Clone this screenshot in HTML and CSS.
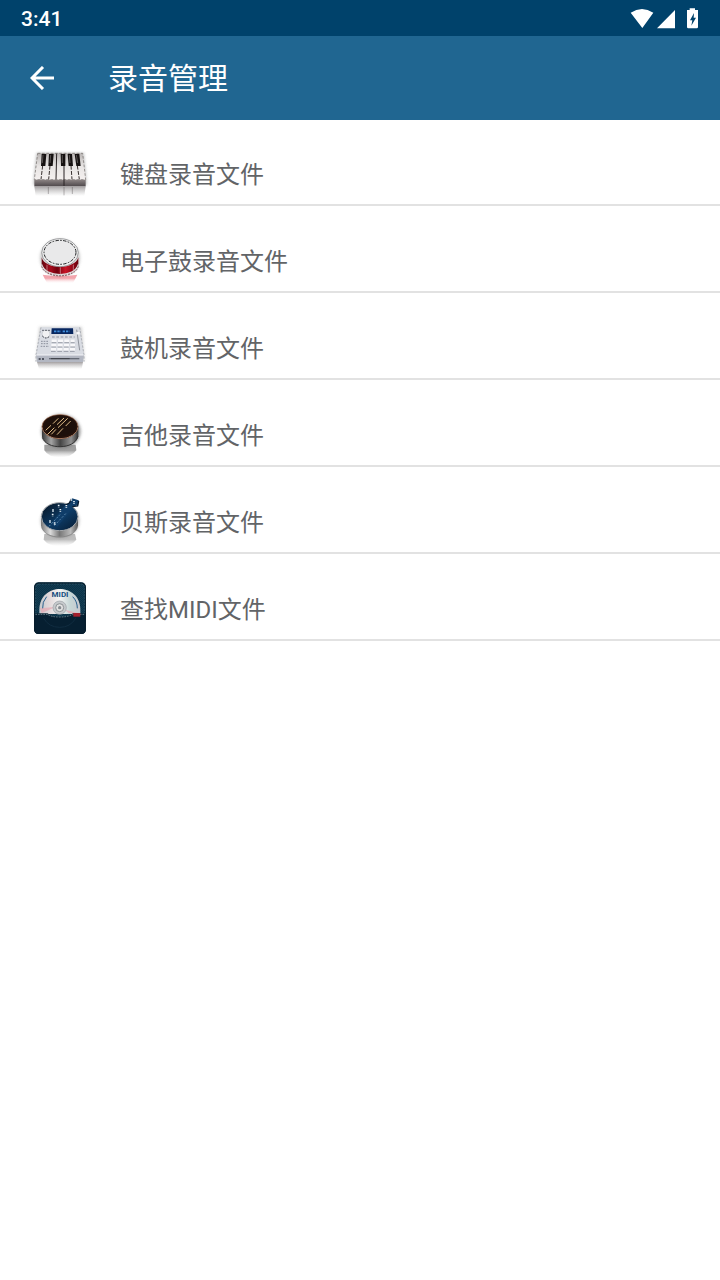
FILE: index.html
```html
<!DOCTYPE html>
<html lang="zh-CN">
<head>
<meta charset="utf-8">
<meta name="viewport" content="width=device-width, initial-scale=1">
<title>录音管理</title>
<link rel="stylesheet" href="styles.css">
</head>
<body>
<div class="status-bar">
  <time class="clock">3:41</time>
  <svg class="status-icons" viewBox="60 20 210 66" aria-hidden="true">
    <path fill="#fff" d="M62 34Q96 12 130 34L97 80ZM141 81L195 26V81ZM239 21h16v5h9v51q0 4-4 4h-25q-4 0-4-4V26h8Z"/>
    <path fill="#00426b" d="M252 35L240 57h7l-3 16 14-24h-7Z"/>
  </svg>
</div>
<header class="app-bar">
  <button class="back" type="button" aria-label="返回">
    <svg viewBox="0 0 24 24" aria-hidden="true"><path d="M24 12H2M13 1L2 12l11 11"/></svg>
  </button>
  <h1 class="title">录音管理</h1>
</header>
<main>
  <ul class="list">
    <li><a class="row" href="#keyboard">
      <svg class="icon" viewBox="15 -6 180 180" aria-hidden="true">
        <defs>
          <linearGradient id="keys" x2="0" y2="1"><stop stop-color="#b9b5b4"/><stop offset=".5" stop-color="#e8e5e4"/><stop offset="1" stop-color="#f4f0ef"/></linearGradient>
          <linearGradient id="front" x2="0" y2="1"><stop stop-color="#8c8484"/><stop offset="1" stop-color="#4e484b"/></linearGradient>
          <linearGradient id="fade" x2="0" y2="1"><stop stop-color="#878284" stop-opacity=".75"/><stop offset="1" stop-color="#aaa" stop-opacity="0"/></linearGradient>
          <filter id="soft" x="-20%" y="-20%" width="140%" height="140%"><feGaussianBlur stdDeviation="5"/></filter>
        </defs>
        <path d="M35 24H176L185 120H25Z" fill="#777" opacity=".5" filter="url(#soft)"/>
        <path d="M38 25H173L182 104H28Z" fill="url(#keys)"/>
        <path d="M38 25H173L182 104H28Z" fill="none" stroke="#6f6967" stroke-width="2" stroke-dasharray="8 5"/>
        <path d="M28 104H182V124H28Z" fill="url(#front)"/>
        <path d="M28 124H182L178 153H32Z" fill="url(#fade)"/>
        <path d="M53 62L48 103M75 62L71 103M138 62L141 103M157 62L163 103" stroke="#37302f" stroke-width="3" stroke-dasharray="12 4"/>
        <path d="M95 26L93 103M117 62V123" stroke="#292324" stroke-width="3"/>
        <path d="M50 27H64L61 63H48ZM72 27H86L83 63H70ZM107 27H121V63H108ZM128 27H141L144 63H131ZM149 27H163L167 63H154Z" fill="#151111"/>
        <path d="M54 30L52 54M77 30L75 54M112 30V54M133 30L135 54M154 30L158 54" stroke="#777170" stroke-width="2"/>
        <path d="M70 126V147M117 126V151M142 126V147" stroke="#514b4d" stroke-width="2" opacity=".6"/>
      </svg>
      <span class="label">键盘录音文件</span></a></li>
    <li><a class="row" href="#drum">
      <svg class="icon" viewBox="15 -6 180 180" aria-hidden="true">
        <defs>
          <linearGradient id="red"><stop stop-color="#64060f"/><stop offset=".25" stop-color="#a50b1c"/><stop offset=".42" stop-color="#71000d"/><stop offset=".65" stop-color="#c81426"/><stop offset="1" stop-color="#68000d"/></linearGradient>
          <linearGradient id="redfade" x2="0" y2="1"><stop offset=".4" stop-color="#ed7f8a" stop-opacity=".7"/><stop offset="1" stop-color="#fff" stop-opacity="0"/></linearGradient>
        </defs>
        <ellipse cx="105" cy="78" rx="60" ry="56" fill="#777" opacity=".4" filter="url(#soft)"/>
        <path d="M53 128Q105 136 157 128L143 155H67Z" fill="url(#redfade)"/>
        <path d="M50 64V97C57 140 153 140 161 97V64Z" fill="#dedede"/>
        <path d="M50 76V101C59 137 151 137 160 101V76C151 114 59 114 50 76Z" fill="url(#red)"/>
        <path d="M50 97C59 138 151 138 160 97" fill="none" stroke="#ddd" stroke-width="4"/>
        <path d="M50 103C59 141 151 141 160 103" fill="none" stroke="#58292e" stroke-width="2" stroke-dasharray="6 3"/>
        <path d="M66 98V118M106 106V128M145 98V118" stroke="#d9a6ab" stroke-width="2"/>
        <ellipse cx="105" cy="62" rx="55" ry="42" fill="#eee" stroke="#77797b" stroke-width="2"/>
        <ellipse cx="105" cy="61" rx="48" ry="36" fill="#e9e9ea" stroke="#242628" stroke-width="3" stroke-dasharray="10 4 5 4"/>
      </svg>
      <span class="label">电子鼓录音文件</span></a></li>
    <li><a class="row" href="#drum-machine">
      <svg class="icon" viewBox="15 -6 180 180" aria-hidden="true">
        <path d="M43 24H170L178 125H34Z" fill="#888" opacity=".4" filter="url(#soft)"/>
        <path d="M48 25H164L177 108H33Z" fill="#d9dce3"/>
        <path d="M33 108H177L174 129H36Z" fill="#b3b7c2"/>
        <path d="M36 129H174L170 150H42Z" fill="url(#fade)"/>
        <path d="M48 25L33 108V128M164 25L177 108V128" fill="none" stroke="#aeb1b8" stroke-width="3" stroke-dasharray="7 4"/>
        <path d="M34 108H176" stroke="#f3f4f7" stroke-width="3"/>
        <path d="M72 119H163" stroke="#666b76" stroke-width="4"/><path d="M78 119H134" stroke="#25282e" stroke-width="2"/>
        <path d="M41 120H59" stroke="#353943" stroke-width="5" stroke-dasharray="6 4"/>
        <path d="M80 28H144L145 45H79Z" fill="#07265f"/>
        <path d="M87 37H108M113 37H134" stroke="#3d8bda" stroke-width="5" stroke-dasharray="7 3"/>
        <circle cx="63" cy="45" r="12" fill="#f1f1f3" stroke="#c0c4cb" stroke-width="2"/>
        <path d="M52 34H76" stroke="#2b303a" stroke-width="3" stroke-dasharray="4 5"/><path d="M52 51Q63 63 74 51" fill="none" stroke="#343842" stroke-width="3" stroke-dasharray="5 4"/>
        <path d="M81 54H149" stroke="#a6abb6" stroke-width="4" stroke-dasharray="8 5"/>
        <path d="M48 67H72M48 74H72M47 82H72" stroke="#8b909c" stroke-width="3" stroke-dasharray="5 3"/>
        <path d="M80 66H149M79 79H150M78 91H151" stroke="#f8f8fa" stroke-width="9" stroke-dasharray="15 4"/>
        <path d="M80 71H149M79 84H150M78 97H151" stroke="#727987" stroke-width="2" stroke-dasharray="14 5"/>
        <path d="M155 32L164 94" stroke="#8e929b" stroke-width="3"/><path d="M154 43L164 42" stroke="#f8f8fa" stroke-width="7"/>
      </svg>
      <span class="label">鼓机录音文件</span></a></li>
    <li><a class="row" href="#guitar">
      <svg class="icon" viewBox="15 -6 180 180" aria-hidden="true">
        <defs>
          <linearGradient id="rim"><stop stop-color="#383838"/><stop offset=".25" stop-color="#a5a5a5"/><stop offset=".5" stop-color="#444"/><stop offset=".8" stop-color="#929292"/><stop offset="1" stop-color="#303030"/></linearGradient>
          <linearGradient id="mirror" x2="0" y2="1"><stop offset=".45" stop-color="#777" stop-opacity=".7"/><stop offset="1" stop-color="#aaa" stop-opacity="0"/></linearGradient>
        </defs>
        <ellipse cx="108" cy="76" rx="59" ry="51" fill="#555" opacity=".6" filter="url(#soft)"/>
        <path d="M58 116H152L154 133Q140 154 105 154T58 133Z" fill="url(#mirror)"/>
        <path d="M51 61V91C60 134 151 134 160 90V61Z" fill="url(#rim)"/>
        <path d="M52 94C63 132 149 132 159 91" fill="none" stroke="#343434" stroke-width="3"/>
        <ellipse cx="105" cy="62" rx="54" ry="36" fill="#1d100b" stroke="#a8795f" stroke-width="3"/>
        <ellipse cx="105" cy="61" rx="50" ry="32" fill="none" stroke="#25120b" stroke-width="4"/>
        <path d="M62 73L78 58M84 53L100 37M67 86L88 65M96 56L117 36M79 85L93 70M99 65L128 37M96 86L114 67M122 60L137 45" stroke="#e0bd88" stroke-width="3"/>
      </svg>
      <span class="label">吉他录音文件</span></a></li>
    <li><a class="row" href="#bass">
      <svg class="icon" viewBox="15 3 180 180" aria-hidden="true">
        <defs>
          <linearGradient id="blue" x2="1" y2="1"><stop stop-color="#061320"/><stop offset=".55" stop-color="#0d3a64"/><stop offset="1" stop-color="#061a30"/></linearGradient>
          <linearGradient id="silver"><stop stop-color="#777"/><stop offset=".25" stop-color="#ddd"/><stop offset=".5" stop-color="#777"/><stop offset=".8" stop-color="#bbb"/><stop offset="1" stop-color="#555"/></linearGradient>
        </defs>
        <ellipse cx="105" cy="93" rx="58" ry="50" fill="#777" opacity=".5" filter="url(#soft)"/>
        <path d="M58 132H150L154 149Q140 168 105 168T56 149Z" fill="url(#mirror)" opacity=".7"/>
        <path d="M48 80V107C57 151 150 151 159 107V80Z" fill="url(#silver)"/>
        <path d="M50 112C62 151 145 151 157 112" fill="none" stroke="#777" stroke-width="2"/>
        <ellipse cx="104" cy="80" rx="55" ry="42" fill="url(#blue)" stroke="#a5a8ab" stroke-width="3"/>
        <path d="M80 100L121 44L133 40L141 25L161 31L159 46L143 50L139 59L97 110Z" fill="#0f3d69"/>
        <path d="M122 45L133 39L139 27M142 50L158 48L161 33" fill="none" stroke="#071a2e" stroke-width="4"/>
        <path d="M72 109L105 74M88 107L123 70" stroke="#7faac9" stroke-width="2" stroke-dasharray="6 5"/>
        <path d="M101 44v8M124 45v8M84 58v8M106 57v8M83 71v8M139 25v8M147 33v8M75 91v8M89 97v8" stroke="#e9f2f8" stroke-width="5" stroke-dasharray="4 2"/>
      </svg>
      <span class="label">贝斯录音文件</span></a></li>
    <li><a class="row" href="#midi">
      <svg class="icon" viewBox="15 3 180 180" aria-hidden="true">
        <defs>
          <linearGradient id="disc"><stop stop-color="#c5c9cd"/><stop offset=".25" stop-color="#e3d9db"/><stop offset=".5" stop-color="#f4f5f4"/><stop offset=".75" stop-color="#c6d6d6"/><stop offset="1" stop-color="#c6c7ce"/></linearGradient>
          <pattern id="denim" width="6" height="6" patternUnits="userSpaceOnUse"><path d="M0 0L6 6" stroke="#235167" stroke-width="1"/></pattern>
        </defs>
        <rect x="27" y="16" width="156" height="155" rx="14" fill="#0b3248"/>
        <rect x="27" y="16" width="156" height="155" rx="14" fill="url(#denim)"/>
        <rect x="32" y="21" width="146" height="145" rx="10" fill="none" stroke="#416475" stroke-width="2" stroke-dasharray="5 4"/>
        <path d="M43 111V98C43 15 166 15 166 98V111Z" fill="url(#disc)"/>
        <path d="M45 94L91 90L50 109ZM119 98L163 109H132Z" fill="#e3a9b4" opacity=".75"/>
        <path d="M65 59Q51 75 53 94M143 59Q157 73 157 94" fill="none" stroke="#285f8d" stroke-width="3"/>
        <text x="105" y="60" text-anchor="middle" class="disc-text">MIDI</text>
        <circle cx="104" cy="92" r="20" fill="#c6c9cc" stroke="#999fa4" stroke-width="2"/><circle cx="104" cy="92" r="12" fill="#e2e2e2" stroke="#8c9295" stroke-width="3"/><circle cx="104" cy="92" r="5" fill="#858b90"/>
        <path d="M27 109H68Q76 119 104 119T144 109H183V157Q183 171 169 171H41Q27 171 27 157Z" fill="#061f31"/>
        <path d="M31 112H68Q78 120 104 120T144 112H179" fill="none" stroke="#8ba1a9" stroke-width="2" stroke-dasharray="5 3"/>
        <path d="M56 124Q72 151 104 151T152 124" fill="none" stroke="#102c40" stroke-width="3"/>
        <path d="M145 108H166V119H145Z" fill="#a3202e"/>
        <rect x="29" y="18" width="152" height="151" rx="12" fill="none" stroke="#081d2b" stroke-width="3"/>
      </svg>
      <span class="label">查找MIDI文件</span></a></li>
  </ul>
</main>
</body>
</html>
```
FILE: styles.css
```css
* { box-sizing: border-box; }
body {
  margin: 0;
  background: #fff;
  font-family: Roboto, "Noto Sans CJK SC", sans-serif;
}
.status-bar {
  display: flex;
  align-items: center;
  justify-content: space-between;
  height: 36px;
  padding: 1px 20px 0 21px;
  background: #00426b;
  color: #fff;
}
.clock {
  font-size: 21px;
  line-height: 36px;
  font-weight: 500;
}
.status-icons {
  width: 70px;
  height: 22px;
}
.app-bar {
  display: flex;
  align-items: center;
  height: 84px;
  padding-left: 18px;
  background: #206691;
  color: #fff;
}
.back {
  display: flex;
  align-items: center;
  justify-content: center;
  width: 48px;
  height: 48px;
  padding: 0;
  border: 0;
  background: none;
  color: inherit;
}
.back svg {
  width: 24px;
  height: 24px;
  fill: none;
  stroke: currentColor;
  stroke-width: 3;
}
.title {
  margin: 0 0 0 42px;
  padding-top: 2px;
  font-size: 30px;
  line-height: 40px;
  font-weight: 400;
}
.list {
  margin: 0;
  padding: 0;
  list-style: none;
}
.row {
  display: flex;
  align-items: center;
  gap: 30px;
  padding: 24px 30px 1px;
  border-bottom: 2px solid #e2e2e2;
  color: #626467;
  font-size: 24px;
  line-height: 36px;
  text-decoration: none;
}
.list li:first-child .row { padding-top: 23px; }
.label { padding-top: 4px; }
.icon {
  flex: none;
  width: 60px;
  height: 60px;
}
.disc-text {
  font: 700 24px Roboto, sans-serif;
  fill: #174e7e;
}
```
